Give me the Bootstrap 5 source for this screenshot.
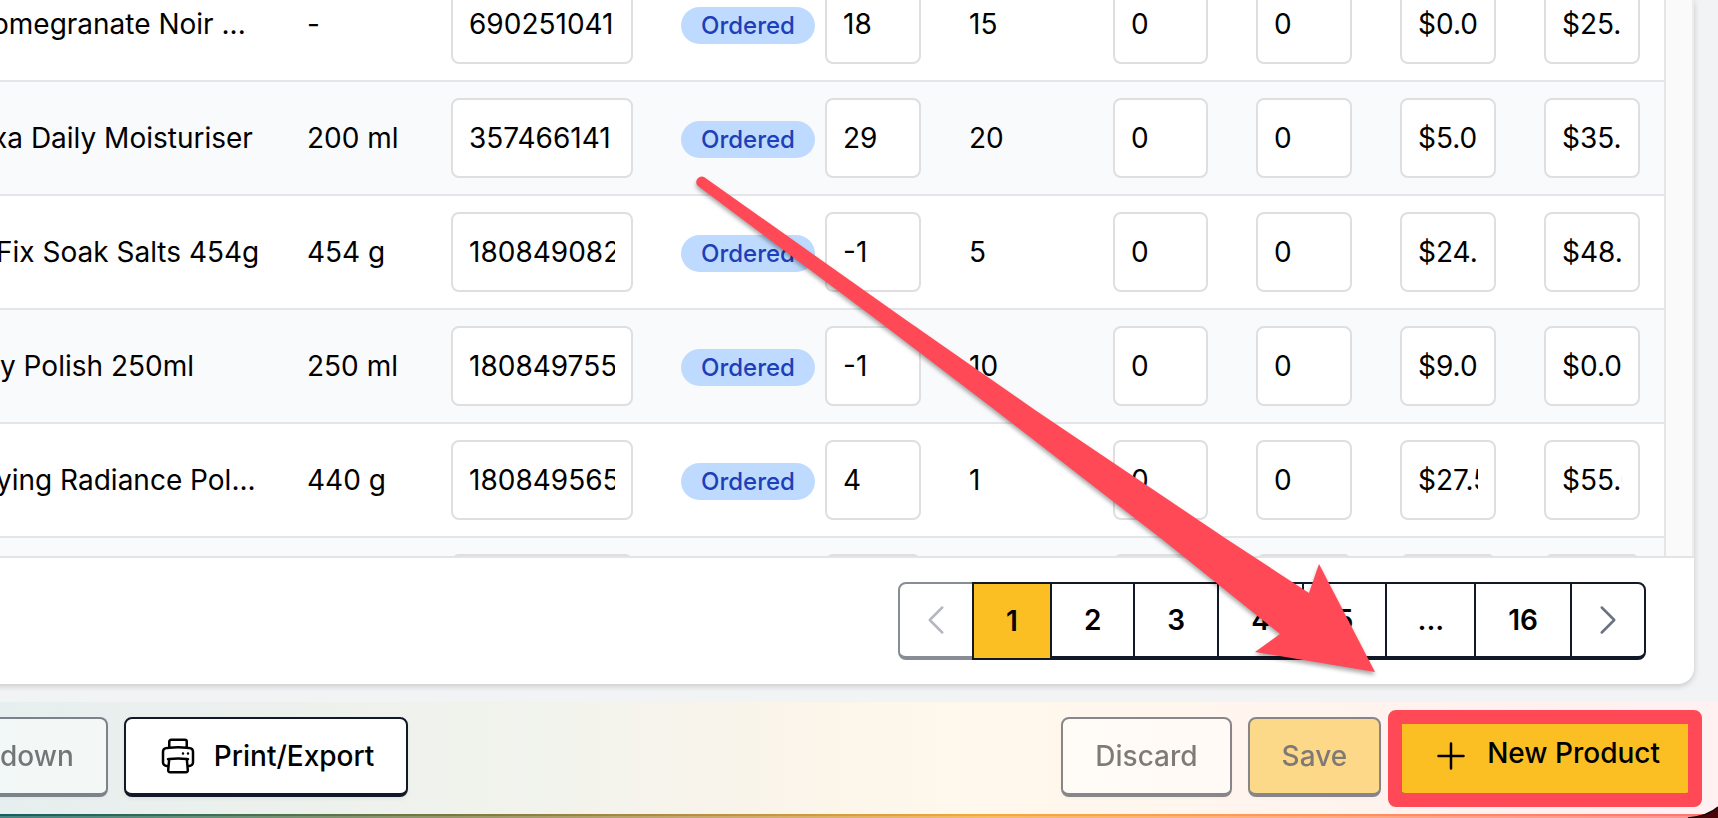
<!DOCTYPE html>
<html lang="en">
<head>
<meta charset="utf-8">
<meta name="viewport" content="width=device-width, initial-scale=1">
<title>Purchase order</title>
<link href="https://cdn.jsdelivr.net/npm/bootstrap@5.3.0/dist/css/bootstrap.min.css" rel="stylesheet">
<style>
  body { font-family: Inter, "Liberation Sans", sans-serif; font-size: 28px; line-height: 40px; color: #000; background: #f2f3f5; }
  .order-card { background: #fff; margin: 0 24px 0 -16px; padding-left: 16px; border-radius: 0 0 16px 0; box-shadow: 0 2px 6px rgba(0,0,0,.18); min-height: 0; }
  .rows-area { min-height: 0; border-bottom: 2px solid #e4e4e7; }
  .rows-table { min-width: 0; border-right: 2px solid #e4e5e7; }
  .gutter-strip { width: 28px; background: #fafafa; border-right: 2px solid #ececee; }
  /* the list is scrolled part of the way through its first visible row */
  .order-lines { table-layout: fixed; width: 100%; margin: -32px 0 0; border-collapse: separate; border-spacing: 0; }
  .order-lines td { height: 114px; padding: 0 24px; vertical-align: middle; white-space: nowrap; border-bottom: 2px solid #e4e5e8; }
  .order-lines td:first-child { padding-left: 0; overflow: hidden; }
  .order-lines tr:nth-child(even) td { background: #f9fafc; }
  /* long names run out of view on the left */
  .order-lines .name-cut { text-indent: -4px; }
  .order-lines .name-cut-more { text-indent: -8px; }
  .col-std { width: 144px; }
  .col-received { width: 143px; }
  .col-sku { width: 230px; }
  .cell-input { display: block; width: 100%; height: 80px; padding: 0 16px; color: #000; background: #fff; border: 2px solid #dfdfe0; border-radius: 8px; }
  .status-pill { display: inline-block; padding: 2px 20px; font-size: 24px; line-height: 33px; font-weight: 500; color: #1e3fb8; background: #bedbff; border-radius: 19px; }
  .pager-area { padding: 24px 48px; }
  .pager { height: 78px; }
  .pager .page-cell { padding: 0 32px; margin-left: -2px; font-size: 28px; font-weight: 600; color: #000; background: #fff; border: 2px solid #111827; border-bottom-width: 4px; border-radius: 0; }
  .pager .page-gap { padding: 0 30px; }
  .pager .page-icon { padding: 0 16px; color: #6b7280; }
  .pager .page-cell:first-child { margin-left: 0; border-color: #888c94; border-radius: 8px 0 0 8px; color: #b5b8c0; }
  .pager .page-cell:last-child { border-radius: 0 8px 8px 0; }
  .pager .page-current { position: relative; background: #fbbf24; border-bottom-width: 2px; }
  .ico { width: 40px; height: 40px; fill: none; stroke: currentColor; stroke-width: 1.5; stroke-linecap: round; stroke-linejoin: round; flex: none; }
  .action-bar { margin-top: 18px; padding: 15px 24px 17px 0; background: linear-gradient(90deg, #e6efef 0, #edf1ec 18%, #f2f3ed 32%, #faf4ea 45%, #fff8ec 56%, #fff6ee 70%, #fff1ef 86%, #fff0f2 100%); }
  .act { height: 80px; padding: 0 32px; font-size: 28px; font-weight: 500; color: #000; background: #fff; border: 2px solid #111827; border-bottom-width: 4px; border-radius: 8px; box-shadow: 0 2px 4px rgba(0,0,0,.06); }
  .act:disabled { opacity: .5; }
  .act-cut { padding-left: 0; border-left: 0; border-radius: 0 8px 8px 0; }
  .act-gold { background: #fbbf24; }
  .act-label { line-height: 34px; }
  .callout-ring { position: absolute; inset: -9px -10px -14px -11px; border: 14px solid #ff4956; border-radius: 8px; pointer-events: none; }
  .edge-line { height: 4px; background: linear-gradient(rgba(255,255,255,0) 50%, rgba(255,255,255,.22) 50%), linear-gradient(90deg, #12605f 0, #3c7053 12%, #78793f 26%, #b89042 41%, #f2a93a 57%, #ff9a55 72%, #ff8468 87%, #ff7474 100%); }
  .window-corner { position: absolute; right: 0; bottom: 0; }
  .callout-arrow { position: absolute; right: 338px; bottom: 138px; pointer-events: none; filter: drop-shadow(0 3px 2px rgba(0,0,0,.35)); }
</style>
</head>
<body>
<div class="position-relative vh-100 d-flex flex-column overflow-hidden">
  <main class="order-card flex-grow-1 d-flex flex-column">
    <div class="rows-area flex-grow-1 d-flex overflow-hidden">
      <div class="rows-table flex-grow-1">
        <table class="order-lines">
          <colgroup><col><col class="col-std"><col class="col-sku"><col class="col-std"><col class="col-std"><col class="col-std"><col class="col-received"><col class="col-std"><col class="col-std"><col class="col-std"></colgroup>
          <tbody>
            <tr><td class="name-cut-more">omegranate Noir ...</td><td>-</td>
              <td><input class="cell-input" aria-label="SKU" value="690251041"></td><td><span class="status-pill">Ordered</span></td>
              <td><input class="cell-input" aria-label="On hand" value="18"></td><td>15</td>
              <td><input class="cell-input" aria-label="Received" value="0"></td><td><input class="cell-input" aria-label="Damaged" value="0"></td>
              <td><input class="cell-input" aria-label="Cost" value="$0.00"></td><td><input class="cell-input" aria-label="Price" value="$25.00"></td></tr>
            <tr><td class="name-cut-more">xa Daily Moisturiser</td><td>200 ml</td>
              <td><input class="cell-input" aria-label="SKU" value="357466141"></td><td><span class="status-pill">Ordered</span></td>
              <td><input class="cell-input" aria-label="On hand" value="29"></td><td>20</td>
              <td><input class="cell-input" aria-label="Received" value="0"></td><td><input class="cell-input" aria-label="Damaged" value="0"></td>
              <td><input class="cell-input" aria-label="Cost" value="$5.00"></td><td><input class="cell-input" aria-label="Price" value="$35.00"></td></tr>
            <tr><td class="name-cut">Fix Soak Salts 454g</td><td>454 g</td>
              <td><input class="cell-input" aria-label="SKU" value="180849082"></td><td><span class="status-pill">Ordered</span></td>
              <td><input class="cell-input" aria-label="On hand" value="-1"></td><td>5</td>
              <td><input class="cell-input" aria-label="Received" value="0"></td><td><input class="cell-input" aria-label="Damaged" value="0"></td>
              <td><input class="cell-input" aria-label="Cost" value="$24.00"></td><td><input class="cell-input" aria-label="Price" value="$48.00"></td></tr>
            <tr><td>y Polish 250ml</td><td>250 ml</td>
              <td><input class="cell-input" aria-label="SKU" value="180849755"></td><td><span class="status-pill">Ordered</span></td>
              <td><input class="cell-input" aria-label="On hand" value="-1"></td><td>10</td>
              <td><input class="cell-input" aria-label="Received" value="0"></td><td><input class="cell-input" aria-label="Damaged" value="0"></td>
              <td><input class="cell-input" aria-label="Cost" value="$9.00"></td><td><input class="cell-input" aria-label="Price" value="$0.00"></td></tr>
            <tr><td class="name-cut">ying Radiance Pol...</td><td>440 g</td>
              <td><input class="cell-input" aria-label="SKU" value="180849565"></td><td><span class="status-pill">Ordered</span></td>
              <td><input class="cell-input" aria-label="On hand" value="4"></td><td>1</td>
              <td><input class="cell-input" aria-label="Received" value="0"></td><td><input class="cell-input" aria-label="Damaged" value="0"></td>
              <td><input class="cell-input" aria-label="Cost" value="$27.50"></td><td><input class="cell-input" aria-label="Price" value="$55.00"></td></tr>
            <tr><td></td><td></td>
              <td><input class="cell-input" aria-label="SKU"></td><td></td>
              <td><input class="cell-input" aria-label="On hand"></td><td></td>
              <td><input class="cell-input" aria-label="Received"></td><td><input class="cell-input" aria-label="Damaged"></td>
              <td><input class="cell-input" aria-label="Cost"></td><td><input class="cell-input" aria-label="Price"></td></tr>
          </tbody>
        </table>
      </div>
      <div class="gutter-strip flex-shrink-0"></div>
    </div>
    <nav class="pager-area d-flex justify-content-end" aria-label="Pages">
      <div class="pager d-flex">
        <button type="button" class="page-cell page-icon d-flex align-items-center" aria-label="Previous"><svg class="ico" viewBox="0 0 24 24"><path d="M15.75 19.5 8.25 12l7.5-7.5"/></svg></button>
        <button type="button" class="page-cell page-current" aria-current="page">1</button>
        <button type="button" class="page-cell">2</button>
        <button type="button" class="page-cell">3</button>
        <button type="button" class="page-cell">4</button>
        <button type="button" class="page-cell">5</button>
        <button type="button" class="page-cell page-gap">...</button>
        <button type="button" class="page-cell">16</button>
        <button type="button" class="page-cell page-icon d-flex align-items-center" aria-label="Next"><svg class="ico" viewBox="0 0 24 24"><path d="m8.25 4.5 7.5 7.5-7.5 7.5"/></svg></button>
      </div>
    </nav>
  </main>

  <footer class="action-bar d-flex gap-3">
    <button type="button" class="act act-cut" disabled>down</button>
    <button type="button" class="act d-flex align-items-center gap-3">
      <svg class="ico" viewBox="0 0 24 24"><path d="M6.72 13.829c-.24.03-.48.062-.72.096m.72-.096a42.415 42.415 0 0 1 10.56 0m-10.56 0L6.34 18m10.94-4.171c.24.03.48.062.72.096m-.72-.096L17.66 18m0 0 .229 2.523a1.125 1.125 0 0 1-1.12 1.227H7.231c-.662 0-1.18-.568-1.12-1.227L6.34 18m11.318 0h1.091A2.25 2.25 0 0 0 21 15.75V9.456c0-1.081-.768-2.015-1.837-2.175a48.055 48.055 0 0 0-1.913-.247M6.34 18H5.25A2.25 2.25 0 0 1 3 15.75V9.456c0-1.081.768-2.015 1.837-2.175a48.041 48.041 0 0 1 1.913-.247m10.5 0a48.536 48.536 0 0 0-10.5 0m10.5 0V3.375c0-.621-.504-1.125-1.125-1.125h-8.25c-.621 0-1.125.504-1.125 1.125v3.659M18 10.5h.008v.008H18V10.5Zm-3 0h.008v.008H15V10.5Z"/></svg>
      <span>Print/Export</span>
    </button>
    <button type="button" class="act ms-auto" disabled>Discard</button>
    <button type="button" class="act act-gold" disabled>Save</button>
    <button type="button" class="act act-gold position-relative d-flex align-items-center">
      <span class="d-flex align-items-start gap-3">
        <svg class="ico" viewBox="0 0 24 24"><path d="M12 4.5v15m7.5-7.5h-15"/></svg>
        <span class="act-label">New Product</span>
      </span>
      <span class="callout-ring"></span>
    </button>
  </footer>
  <div class="edge-line"></div>

  <svg class="window-corner" width="40" height="12" viewBox="0 0 40 12" aria-hidden="true"><path d="M40 1Q30 10 10 12H40Z" fill="#4a0508"/><path d="M40 1Q30 10 10 12" fill="none" stroke="#1a0204" stroke-width="1.5"/></svg>

  <svg class="callout-arrow" width="690" height="510" viewBox="690 170 690 510" aria-hidden="true"><path fill="#ff4956" d="M704 177L906 320L1035 410L1228 540L1309 593L1319 564L1375 672L1255 652L1280 634L1163 540L995 410L877 320L698 186A5.500 5.500 0 0 1 704 177Z"/></svg>
</div>
<script src="https://cdn.jsdelivr.net/npm/bootstrap@5.3.0/dist/js/bootstrap.bundle.min.js"></script>
</body>
</html>
